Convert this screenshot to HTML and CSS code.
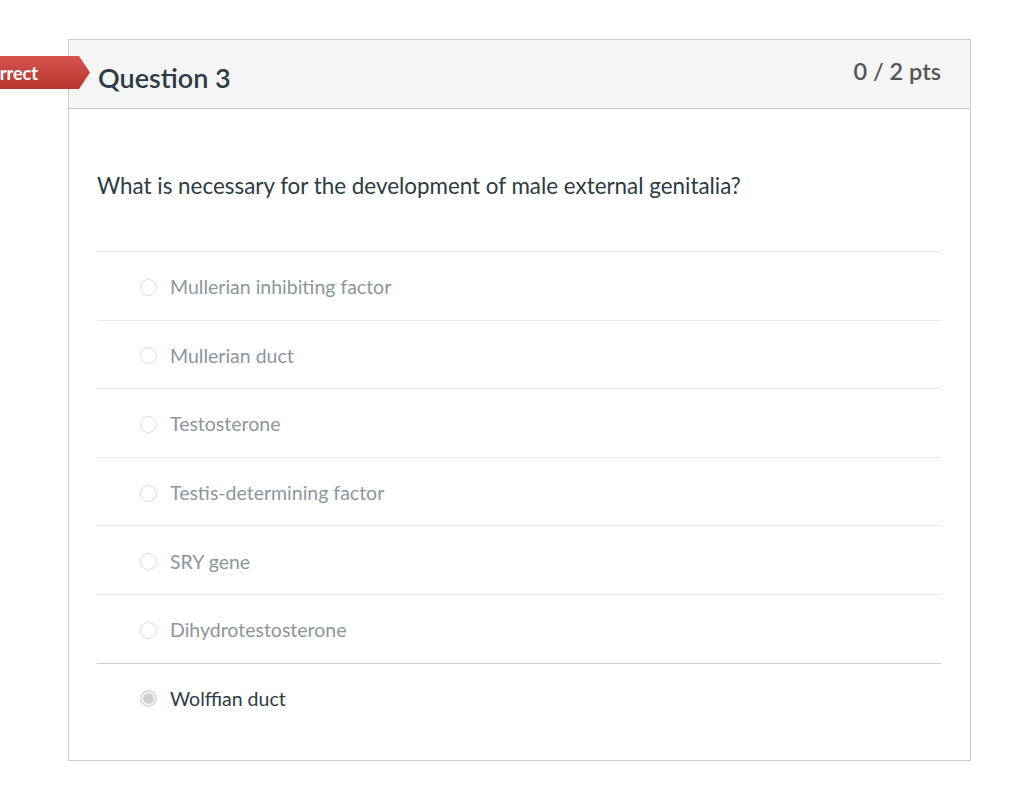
FILE: index.html
```html
<!DOCTYPE html>
<html>
<head>
<meta charset="utf-8">
<link rel="stylesheet" href="styles.css">
</head>
<body>
<div class="card">
  <div class="badge"><span>Incorrect</span></div>
  <div class="header">
    <h2 class="title">Question 3</h2>
    <div class="pts">0 / 2 pts</div>
  </div>
  <div class="body">
    <p class="question">What is necessary for the development of male external genitalia?</p>
    <div class="answers">
      <div class="answer"><span class="radio"></span><span class="label">Mullerian inhibiting factor</span></div>
      <div class="answer"><span class="radio"></span><span class="label">Mullerian duct</span></div>
      <div class="answer"><span class="radio"></span><span class="label">Testosterone</span></div>
      <div class="answer"><span class="radio"></span><span class="label">Testis-determining factor</span></div>
      <div class="answer"><span class="radio"></span><span class="label">SRY gene</span></div>
      <div class="answer"><span class="radio"></span><span class="label">Dihydrotestosterone</span></div>
      <div class="answer selected"><span class="radio"></span><span class="label">Wolffian duct</span></div>
    </div>
  </div>
</div>
</body>
</html>
```
FILE: styles.css
```css
html, body {
  margin: 0;
  padding: 0;
  background: #fff;
  font-family: Lato, "Open Sans", sans-serif;
}
body {
  padding-top: 39px;
  padding-left: 68px;
  overflow: hidden;
}
.card {
  position: relative;
  width: 901px;
  border: 1px solid #c7cdd1;
  background: #fff;
}
.badge {
  position: absolute;
  top: 16px;
  right: calc(100% - 21px);
  height: 33px;
  width: 200px;
  background: linear-gradient(#d6554f, #b8352f);
  clip-path: polygon(0 0, 189px 0, 200px 50%, 189px 100%, 0 100%);
  display: flex;
  align-items: center;
  justify-content: flex-end;
  padding-right: 52px;
  box-sizing: border-box;
  color: #fff;
  font-size: 18px;
  font-weight: 700;
}
.header {
  height: 69px;
  box-sizing: border-box;
  background: #f5f5f5;
  border-bottom: 1px solid #c7cdd1;
  display: flex;
  justify-content: space-between;
  align-items: flex-start;
  padding: 0 29px;
}
.title {
  margin: 0;
  margin-top: 20px;
  font-size: 27px;
  font-weight: 600;
  line-height: 36px;
  color: #2d3b45;
}
.pts {
  margin-top: 15px;
  font-size: 23.5px;
  font-weight: 600;
  line-height: 32px;
  color: #555;
}
.body {
  padding: 62px 29px 29px 28px;
}
.question {
  margin: 0 0 50px;
  font-size: 22.4px;
  line-height: 30px;
  color: #2d3b45;
}
.answer {
  display: flex;
  align-items: center;
  height: 68.6px;
  box-sizing: border-box;
  border-top: 1px solid #e8eaec;
  padding-left: 43px;
  padding-top: 3px;
}
.answer.selected {
  border-top-color: #c7cdd1;
}
.radio {
  width: 17px;
  height: 17px;
  box-sizing: border-box;
  border-radius: 50%;
  border: 1px solid #dadada;
  background: #fff;
  margin-right: 13px;
  flex: none;
}
.answer.selected .radio {
  border: 2px solid #dcdcdc;
  background: radial-gradient(circle, #cfcfcf 0 5px, #fff 5.5px);
}
.label {
  font-size: 19.5px;
  color: #8b969e;
  line-height: 26px;
}
.answer.selected .label {
  color: #2d3b45;
}
```
